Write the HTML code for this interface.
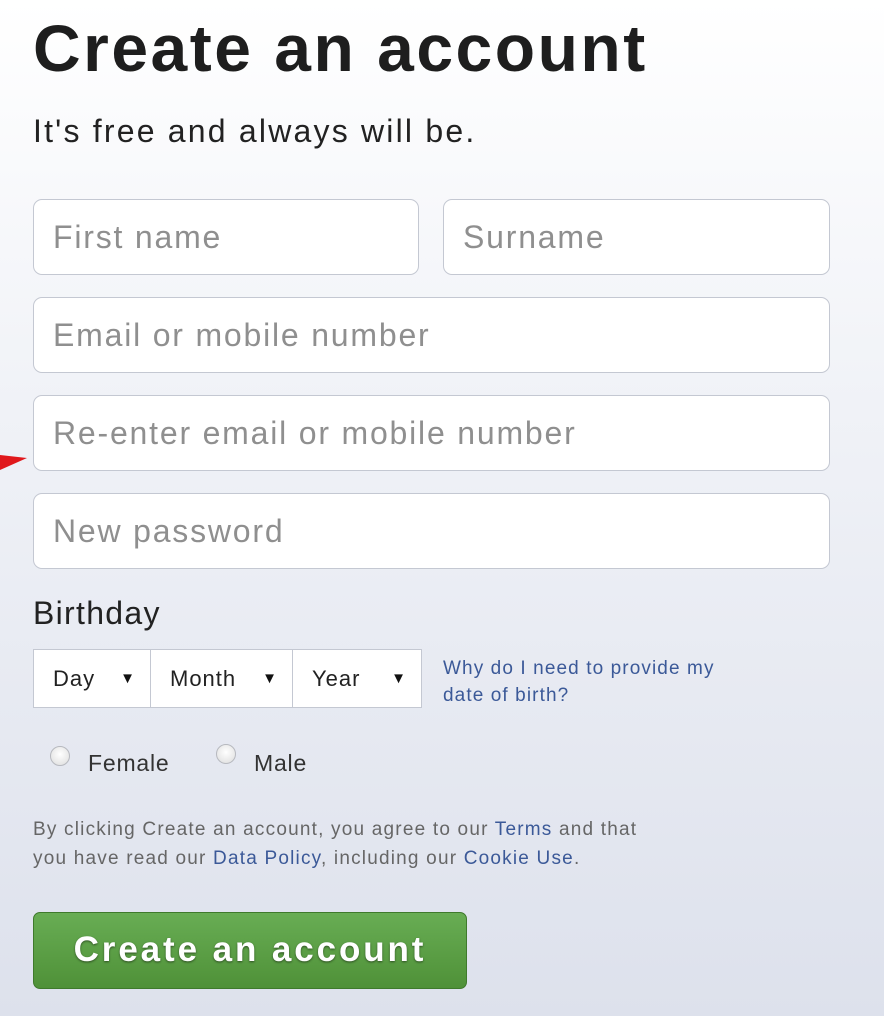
<!DOCTYPE html>
<html><head><style>
*{margin:0;padding:0;box-sizing:border-box}
body{width:884px;height:1016px;overflow:hidden;position:relative;font-family:"Liberation Sans",Arial,sans-serif;background:linear-gradient(#fff 0%,#f0f2f7 40%,#dde1ec 100%)}
.a{position:absolute}
h1{position:absolute;left:33px;top:10px;font-size:66px;font-weight:bold;color:#1e1e1e;letter-spacing:2.5px}
.sub{left:33px;top:113px;font-size:32px;color:#222;letter-spacing:2.2px}
.in{position:absolute;background:#fff;border:1px solid #c4c8d2;border-radius:9px;height:76px;font-size:32px;color:#8f8f8f;padding-left:19px;line-height:74px;letter-spacing:1.8px}
.sel{position:absolute;top:649px;height:59px;background:#fff;border:1px solid #c4c8d2;font-size:22px;color:#222;line-height:57px;padding-left:19px;letter-spacing:1px}
.sel span{position:absolute;right:14px;font-size:15px;color:#111}
.link{color:#3b5998}
.radio{position:absolute;width:20px;height:20px;border-radius:50%;border:1px solid #b7b9bf;background:radial-gradient(circle at 50% 40%,#fff,#dcdcdc)}
</style></head><body>
<h1>Create an account</h1>
<div class="a sub">It's free and always will be.</div>
<div class="in" style="left:33px;top:199px;width:386px">First name</div>
<div class="in" style="left:443px;top:199px;width:387px">Surname</div>
<div class="in" style="left:33px;top:297px;width:797px">Email or mobile number</div>
<div class="in" style="left:33px;top:395px;width:797px">Re-enter email or mobile number</div>
<div class="in" style="left:33px;top:493px;width:797px">New password</div>
<svg class="a" style="left:0;top:448px" width="30" height="25"><polygon points="0,7 27,10 0,22" fill="#e0181c"/></svg>
<div class="a" style="left:33px;top:595px;font-size:32px;color:#222;letter-spacing:1.3px">Birthday</div>
<div class="sel" style="left:33px;width:118px">Day<span>▼</span></div>
<div class="sel" style="left:150px;width:143px">Month<span>▼</span></div>
<div class="sel" style="left:292px;width:130px">Year<span>▼</span></div>
<div class="a link" style="left:443px;top:655px;font-size:19px;line-height:27px;letter-spacing:1.1px">Why do I need to provide my<br>date of birth?</div>
<div class="radio" style="left:50px;top:746px"></div>
<div class="a" style="left:88px;top:750px;font-size:23px;color:#333;letter-spacing:0.8px">Female</div>
<div class="radio" style="left:216px;top:744px"></div>
<div class="a" style="left:254px;top:750px;font-size:23px;color:#333;letter-spacing:0.8px">Male</div>
<div class="a" style="left:33px;top:815px;font-size:19px;line-height:29px;color:#666;letter-spacing:1.2px;white-space:nowrap">By clicking Create an account, you agree to our <span class="link">Terms</span> and that<br>you have read our <span class="link">Data Policy</span>, including our <span class="link">Cookie Use</span>.</div>
<div class="a" style="left:33px;top:912px;width:434px;height:77px;border-radius:7px;border:1px solid #3f7a2c;background:linear-gradient(#68ad54,#4f9138);color:#fff;font-size:35px;font-weight:bold;text-align:center;line-height:74px;letter-spacing:2.9px;text-shadow:0 1px 2px rgba(0,0,0,.5)">Create an account</div>
</body></html>
